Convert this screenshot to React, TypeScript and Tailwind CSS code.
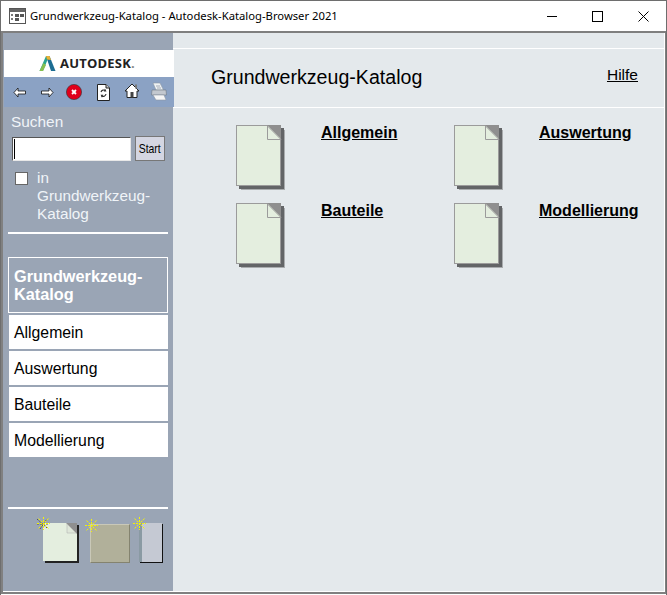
const NAV_ITEMS = ['Allgemein', 'Auswertung', 'Bauteile', 'Modellierung'];

function TitleIcon() {
  return (
    <svg width="17" height="16" viewBox="0 0 17 16" className="shrink-0">
      <rect x="0.5" y="0.5" width="16" height="15" fill="#fff" stroke="#555" />
      <rect x="1" y="1" width="15" height="3" fill="#666" />
      <rect x="2" y="6" width="2" height="2" fill="#777" />
      <rect x="2" y="10" width="2" height="2" fill="#777" />
      <rect x="6" y="6" width="4" height="3" fill="#555" />
      <rect x="11" y="6" width="4" height="3" fill="#555" />
      <rect x="6" y="10" width="4" height="3" fill="#555" />
    </svg>
  );
}

function AutodeskLogo() {
  return (
    <svg width="17" height="17" viewBox="0 0 17 17" className="shrink-0">
      <path d="M0.5 16 L7 1 H10 L4 16 Z" fill="#2aa58f" />
      <path d="M7 1 H10.5 L16.5 16 H12 Z" fill="#1c6d93" />
      <path d="M0.5 16 L4.5 8 L7 10 L4 16 Z" fill="#86bf4e" />
      <path d="M7 1 H10.5 L12 5 L8 4.5 Z" fill="#e9b234" />
    </svg>
  );
}

function ToolbarIcons() {
  return (
    <div className="relative z-10 ml-px flex items-center w-[170px] h-[30px] bg-[#8ba2c4]">
      <svg width="13" height="11" viewBox="0 0 13 11" className="ml-[9px]">
        <path d="M5 1 L1 5.5 L5 10 V7 H12.5 V4 H5 Z" fill="#fff" stroke="#111" strokeWidth="0.8" />
      </svg>
      <svg width="13" height="11" viewBox="0 0 13 11" className="ml-[15px]">
        <path d="M8 1 L12 5.5 L8 10 V7 H0.5 V4 H8 Z" fill="#fff" stroke="#111" strokeWidth="0.8" />
      </svg>
      <svg width="16" height="16" viewBox="0 0 16 16" className="ml-[12px]">
        <circle cx="8" cy="8" r="7.6" fill="#e0001b" stroke="#333" strokeWidth="0.6" />
        <path d="M6 6 L10 10 M10 6 L6 10" stroke="#fff" strokeWidth="1.8" />
      </svg>
      <svg width="13" height="17" viewBox="0 0 13 17" className="ml-[15px]">
        <path d="M0.5 0.5 H9 L12.5 4 V16.5 H0.5 Z" fill="#fff" stroke="#222" />
        <path d="M9 0.5 V4 H12.5" fill="#ccc" stroke="#222" />
        <path d="M4 8 A3 3 0 0 1 8.5 6.5 M9 10 A3 3 0 0 1 4.5 12" fill="none" stroke="#333" strokeWidth="1.2" />
        <path d="M8 4.5 L9.5 7.5 L6.8 7.5 Z M5 13.8 L3.6 10.8 L6.2 10.8 Z" fill="#333" />
      </svg>
      <svg width="16" height="15" viewBox="0 0 16 15" className="ml-[14px] mb-[3px]">
        <path d="M8 1 L15 8 H13 V14.5 H3 V8 H1 Z" fill="#fff" stroke="#222" />
        <rect x="6.5" y="9" width="3" height="5.5" fill="#444" />
        <rect x="11" y="1.5" width="2" height="4" fill="#777" />
      </svg>
      <svg width="16" height="19" viewBox="0 0 16 19" className="ml-[11px] mb-[2px]">
        <path d="M2 1 H9 L12.5 8 H5 Z" fill="#eef2f4" stroke="#8f98a4" strokeWidth="0.6" />
        <path d="M1 8 H15 L15.5 13 H0.5 Z" fill="#c3c8cf" stroke="#6f7884" strokeWidth="0.6" />
        <path d="M2 13 H13 L15 18 H5 Z" fill="#f6f6f6" stroke="#8f98a4" strokeWidth="0.6" />
        <path d="M5 4 H9 M6 6 H10" stroke="#8f98a4" strokeWidth="0.8" />
      </svg>
    </div>
  );
}

function PageIcon() {
  return (
    <svg width="49" height="65" viewBox="0 0 49 65" className="shrink-0">
      <rect x="5" y="5" width="44" height="60" fill="#a9acae" />
      <rect x="3" y="3" width="45" height="61" fill="#636567" />
      <rect x="0.5" y="0.5" width="44" height="60" fill="#e4eedf" stroke="#9b9b9b" />
      <path d="M31 0 H45 V14 Z" fill="#8f8f8f" />
      <path d="M31.5 1 V14.5 H45 Z" fill="#e4eedf" stroke="#9b9b9b" />
    </svg>
  );
}

function Sparkle({ shaded = false }: { shaded?: boolean }) {
  return (
    <svg width="15" height="15" viewBox="0 0 15 15" className="absolute left-[-7px] top-[-7px]">
      {shaded && <path d="M1 3 L11 12 M1 8 H12 M4 13 L11 3" stroke="#555" strokeWidth="1" strokeDasharray="2 1" />}
      <path d="M7.5 1 V14 M1 7.5 H14 M2.5 2.5 L12.5 12.5 M12.5 2.5 L2.5 12.5" stroke="#f5f500" strokeWidth="1" strokeDasharray="2 1" />
    </svg>
  );
}

function CatalogEntry({ label }: { label: string }) {
  return (
    <div className="flex w-[218px] h-[78px]">
      <PageIcon />
      <a className="ml-[36px] text-[16px] leading-[18px] font-bold text-black underline whitespace-nowrap mt-[-1px]">{label}</a>
    </div>
  );
}

export default function App() {
  return (
    <div className="w-[667px] h-[595px] flex flex-col bg-white border-t border-x border-[#6e6e6e] font-['Liberation_Sans',Arial,sans-serif] overflow-hidden">
      <div className="h-[30px] shrink-0 flex items-center bg-white pl-[8px]">
        <TitleIcon />
        <span className="ml-[4px] text-[11.25px] text-black font-['Noto_Sans',sans-serif] whitespace-nowrap">
          Grundwerkzeug-Katalog - Autodesk-Katalog-Browser 2021
        </span>
        <div className="ml-auto flex items-center h-full">
          <div className="w-[45px] flex justify-center">
            <div className="w-[10px] h-px bg-black" />
          </div>
          <div className="w-[46px] flex justify-center">
            <div className="w-[11px] h-[11px] border border-black" />
          </div>
          <div className="w-[46px] flex justify-center">
            <svg width="11" height="11" viewBox="0 0 11 11">
              <path d="M0.5 0.5 L10.5 10.5 M10.5 0.5 L0.5 10.5" stroke="#000" strokeWidth="1" />
            </svg>
          </div>
        </div>
      </div>
      <div className="h-[563px] shrink-0 flex border-t-2 border-t-[#7f7f7f] border-l-2 border-l-[#808080] border-r border-r-[#7f7f7f] border-b-2 border-b-[#808080]">
        <aside className="w-[170px] shrink-0 flex flex-col bg-[#9aa5b5] border-b border-b-white">
          <div className="h-[17px] shrink-0" />
          <div className="relative z-10 ml-px w-[170px] h-[27px] shrink-0 bg-white flex items-center pl-[35px]">
            <AutodeskLogo />
            <span className="ml-[4px] text-[13px] font-bold text-[#222] tracking-[0.2px] font-['Open_Sans',sans-serif] whitespace-nowrap">
              AUTODESK<span className="text-[#888]">.</span>
            </span>
          </div>
          <ToolbarIcons />
          <div className="pl-[8px] pr-[5px]">
            <div className="pt-[6px] text-[15.4px] leading-[18px] text-[#f0f4f8]">Suchen</div>
            <div className="flex items-center mt-[5px]">
              <div className="w-[119px] h-[24px] bg-white ml-[1px] border-t border-l border-t-[#555] border-l-[#555] border-b border-r border-b-[#e8e8e8] border-r-[#e8e8e8] flex items-center pl-[1px]">
                <div className="w-px h-[20px] bg-black" />
              </div>
              <button className="ml-[4px] w-[30px] h-[25px] bg-[#d4d6e2] border border-[#777] text-[13px] text-black overflow-hidden">
                <span className="inline-block scale-x-[0.8]">Start</span>
              </button>
            </div>
            <div className="flex mt-[8px]">
              <div className="ml-[4px] mt-[3px] w-[13px] h-[13px] bg-white border border-[#666] shrink-0" />
              <div className="ml-[9px] text-[15.3px] leading-[18px] text-[#f0f4f8]">
                in
                <br />
                Grundwerkzeug-
                <br />
                Katalog
              </div>
            </div>
            <div className="h-[2px] bg-white mt-[9px] ml-[-3px]" />
          </div>
          <nav className="flex flex-col mt-[23px] px-[5px] gap-[2px]">
            <div className="h-[56px] border border-white px-[5px] pt-[9px] text-[16.3px] leading-[18px] font-bold text-white">
              Grundwerkzeug-
              <br />
              Katalog
            </div>
            {NAV_ITEMS.map((item) => (
              <div key={item} className="h-[34px] ml-px bg-white flex items-center pl-[5px] pt-px text-[15.8px] text-black">
                {item}
              </div>
            ))}
          </nav>
          <div className="h-[2px] shrink-0 bg-white mt-[50px] mx-[5px]" />
          <div className="flex items-start mt-[14px] pl-[40px]">
            <div className="relative w-[36px] h-[40px]">
              <svg width="36" height="40" viewBox="0 0 36 40">
                <rect x="2" y="2" width="34" height="38" fill="#222" />
                <rect x="0" y="0" width="34" height="38" fill="#e4eedf" />
                <path d="M23 0 H34 V11 Z" fill="#8f8f8f" />
                <path d="M24 1 V10 H33 Z" fill="#dfe7da" stroke="#aaa" strokeWidth="0.5" />
              </svg>
              <Sparkle shaded />
            </div>
            <div className="relative ml-[11px] w-[40px] h-[39px] mt-px bg-[#b1b09a] border border-t-[#c9c8b8] border-l-[#c9c8b8] border-b-[#84836f] border-r-[#84836f]">
              <Sparkle />
            </div>
            <div className="relative ml-[9px] w-[23px] h-[39px] flex shadow-[1px_1px_0_#111]">
              <div className="w-[3px] bg-[#8a9aa3]" />
              <div className="flex-1 bg-[#c5c9d3]" />
              <Sparkle />
            </div>
          </div>
        </aside>
        <main className="flex-1 min-w-0 bg-[#e4e9ec] flex flex-col border-r border-r-white border-b border-b-white">
          <div className="h-[16px] shrink-0 border-b border-b-white" />
          <div className="h-[59px] shrink-0 flex items-start justify-between border-b border-b-white pl-[38px] pr-[26px] pt-[16px]">
            <h1 className="text-[19.6px] leading-[24px] text-black whitespace-nowrap">Grundwerkzeug-Katalog</h1>
            <a className="text-[15.5px] leading-[18px] mt-px text-black underline">Hilfe</a>
          </div>
          <div className="grid grid-cols-[218px_218px] pl-[63px] pt-[17px]">
            {NAV_ITEMS.map((item) => (
              <CatalogEntry key={item} label={item} />
            ))}
          </div>
        </main>
      </div>
    </div>
  );
}
